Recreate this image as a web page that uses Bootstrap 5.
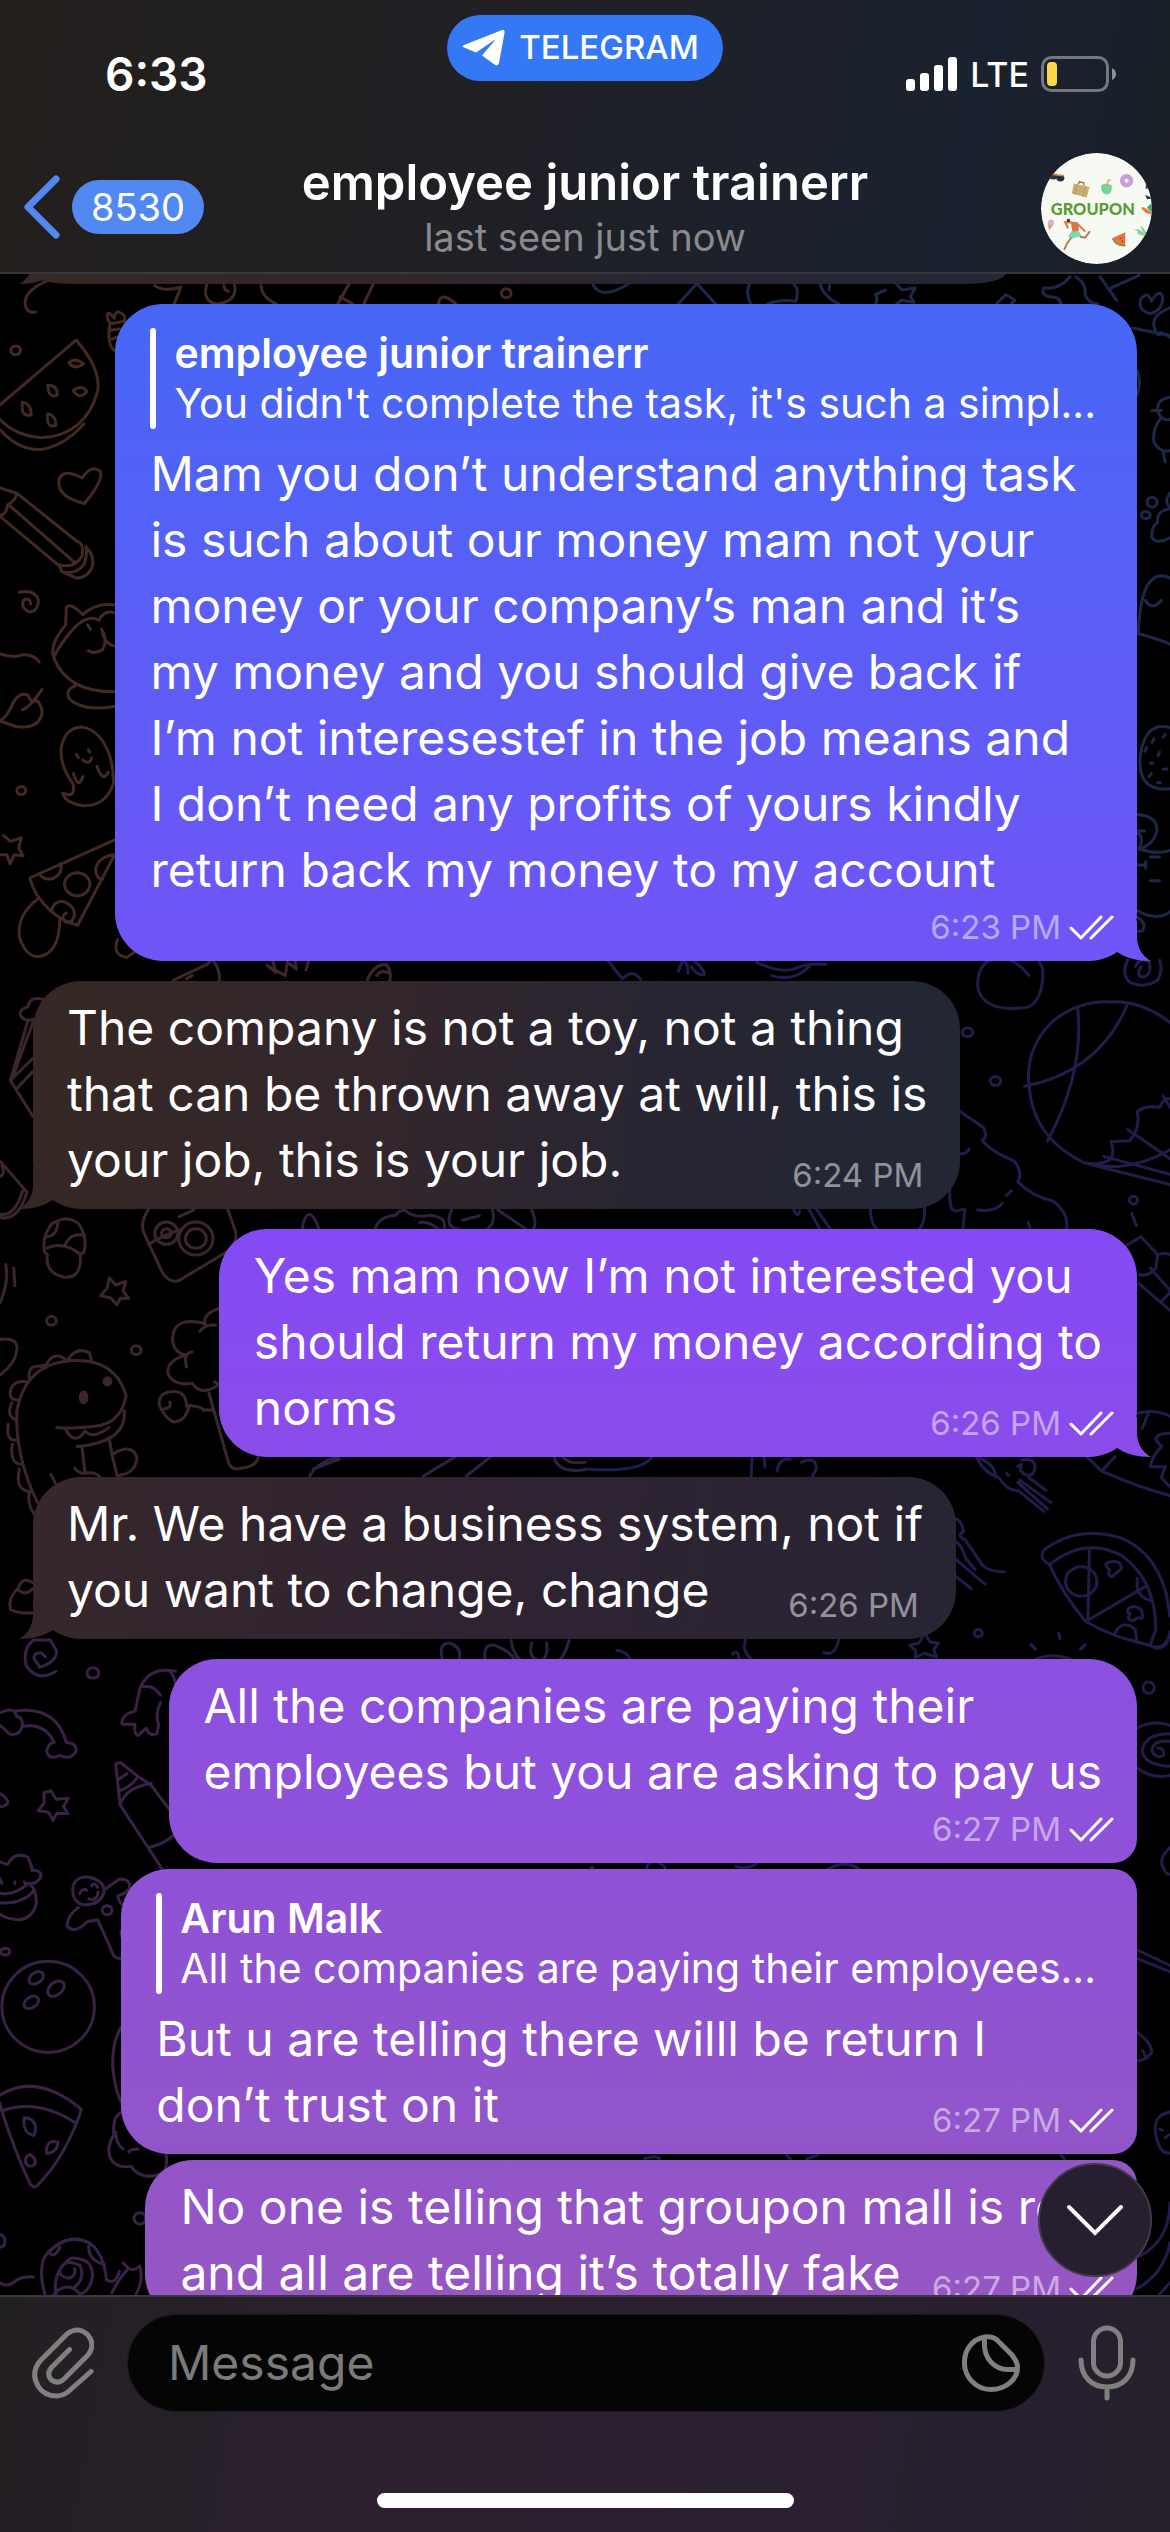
<!DOCTYPE html>
<html lang="en">
<head>
<meta charset="utf-8">
<meta name="viewport" content="width=device-width, initial-scale=1">
<title>employee junior trainerr</title>
<link href="https://cdn.jsdelivr.net/npm/bootstrap@5.3.0/dist/css/bootstrap.min.css" rel="stylesheet">
<style>
  body { background: #000; color: #fff; font-family: Inter, "Liberation Sans", sans-serif; }
  svg { display: block; flex: none; }
  button, a { color: inherit; }

  /* header */
  .chat-header { background: linear-gradient(100deg, #231f1d 0%, #211f20 22%, #1f2027 48%, #1a222f 82%, #1a1f26 100%); border-bottom: 2px solid #37383b; }
  .tri { display: grid; grid-template-columns: 1fr auto 1fr; }
  .status-row { height: 153px; padding: 15px 54px 0; }
  .clock { font-size: 46px; line-height: 60px; font-weight: 600; margin: 29px 0 0 51px; }
  .app-pill { height: 66px; padding: 0 24px 0 15px; gap: 14px; background: #3478f6; border-radius: 33px; font-size: 33px; font-weight: 500; }
  .signal { height: 60px; margin-top: 29px; gap: 12px; font-size: 34px; font-weight: 500; }
  .nav-row { height: 119px; padding: 0 18px; }
  .back-link { gap: 12px; height: 108px; padding-left: 6px; }
  .unread { background: #5288f2; height: 54px; padding: 0 19px; border-radius: 27px; font-size: 38px; line-height: 54px; }
  .peer-name { font-size: 49px; line-height: 60px; font-weight: 600; margin: 0; }
  .peer-seen { font-size: 38px; line-height: 48px; color: #8b8b8e; }

  /* thread */
  .thread { gap: 20px; padding: 0 33px; min-height: 0; }
  .wallpaper { inset: 0; width: 100%; height: 100%; fill: none; stroke-width: 3; stroke-linecap: round; stroke-linejoin: round; }
  .wallpaper path, .wallpaper ellipse { vector-effect: non-scaling-stroke; }
  .bubble { border-radius: 48px; padding: 14px 35px 16px; font-size: 48px; line-height: 66px; }
  .bubble p { margin: 0; white-space: nowrap; }
  .bubble-in { background: linear-gradient(95deg, #362824 0%, #33262c 38%, #282532 66%, #222734 100%); padding-left: 34px; padding-right: 33px; }
  .bubble-in.low { background: linear-gradient(95deg, #36272c 0%, #2f2332 50%, #282434 100%); }
  .bubble-out { background: linear-gradient(#4667f6 12%, #7155f6 38%, #844af5 48.5%, #8a4dea 57.5%, #8c50e2 65.5%, #8f52d8 73.5%, #9255c9 85%, #9656c3 91%) fixed; }
  .join-top { border-top-right-radius: 24px; }
  .join-bottom { border-bottom-right-radius: 24px; }
  .stack { gap: 6px; }
  .tail { bottom: 0; }
  .tail-out { right: -14px; }
  .tail-in { left: -14px; }
  .peek { width: 88%; height: 10px; border-radius: 0 0 40px 40px / 0 0 10px 10px; padding: 0; }
  .stamp { font-size: 33px; line-height: 36px; color: #ffffff80; margin-top: 6px; gap: 8px; }
  .stamp.tucked { margin-top: -36px; }
  .bubble-in .stamp { margin-right: 4px; }
  .bubble-out .stamp { margin-right: -12px; }
  .bubble.quoted { padding-top: 24px; padding-right: 41px; }
  .bubble.quoted .stamp { margin-right: -18px; }
  .quote { gap: 18px; margin-bottom: 12px; font-size: 41px; line-height: 51px; white-space: nowrap; }
  .quote-bar { width: 6px; height: 101px; border-radius: 3px; background: #fff; }
  .quote strong { font-weight: 600; display: block; height: 50px; }
  .jump { right: 18px; bottom: 18px; width: 114px; height: 114px; border-radius: 50%; background: #271f30; border: 2px solid #423a4b; }

  /* composer */
  .composer { background: linear-gradient(100deg, #221f22 0%, #2c202f 35%, #2c2030 55%, #251f2c 100%); border-top: 2px solid #3b373e; height: 237px; color: #808080; }
  .composer-row { padding: 17px 34px 0 32px; gap: 33px; }
  .field-wrap { height: 98px; border-radius: 49px; background: #050505; border: 1px solid #1d1a1f; padding: 0 24px 0 40px; }
  .field-wrap input { background: none; border: 0; outline: 0; color: #fff; font-size: 48px; padding: 0; min-width: 0; }
  .field-wrap input::placeholder { color: #7b7b7b; opacity: 1; }
  .plain { background: none; border: 0; padding: 0; color: inherit; }
  .home-bar { width: 417px; height: 15px; border-radius: 8px; background: #fff; margin: 81px auto 0; }
</style>
<script src="https://cdn.jsdelivr.net/npm/bootstrap@5.3.0/dist/js/bootstrap.bundle.min.js"></script>
</head>
<body class="vh-100 overflow-hidden d-flex flex-column">

<svg width="0" height="0" class="position-absolute" aria-hidden="true">
  <symbol id="ticks" viewBox="0 0 45 27"><path d="M2 14 L12 24 L32 3 M22 24 L43 3" fill="none" stroke="#fff" stroke-width="3" stroke-linecap="round" stroke-linejoin="round"/></symbol>
  <symbol id="tail" viewBox="0 0 34 40"><path d="M20 0 V16 C20 27 26 36 34 40 C20 40 9 37 0 31 V0 Z" fill="currentColor"/></symbol>
</svg>

<header class="chat-header flex-shrink-0">
  <div class="status-row tri align-items-start">
    <div class="clock">6:33</div>
    <div class="app-pill d-flex align-items-center">
      <svg width="43" height="36" viewBox="0 0 43 36"><path d="M1 17 Q0 16 2 15 L40 0 Q43 -1 42.500 3 L37 33 Q36 37 32.500 34.500 L20 25.500 L34 9 L14 22.500 Z" fill="#fff"/></svg>
      <span>TELEGRAM</span>
    </div>
    <div class="signal d-flex align-items-center justify-content-end">
      <svg width="52" height="35" viewBox="0 0 52 35" fill="#fff"><rect y="22" width="9" height="12" rx="3"/><rect x="14" y="16" width="9" height="18" rx="3"/><rect x="28" y="8" width="9" height="26" rx="3"/><rect x="42" width="9" height="34" rx="3"/></svg>
      <span>LTE</span>
      <svg width="75" height="36" viewBox="0 0 75 36"><rect x="1.500" y="1.500" width="65" height="33" rx="9" fill="none" stroke="#74777f" stroke-width="3"/><rect x="6" y="6" width="10" height="24" rx="4" fill="#fad649"/><path d="M71 12 Q75 14 75 18 T71 24 Z" fill="#8d9096"/></svg>
    </div>
  </div>
  <div class="nav-row tri">
    <a href="#" class="back-link d-flex align-items-center text-decoration-none text-white" aria-label="Back, 8530 unread">
      <svg width="36" height="64" viewBox="0 0 36 64"><path d="M32 4 L4 32 L32 60" fill="none" stroke="#5288f2" stroke-width="7" stroke-linecap="round" stroke-linejoin="round"/></svg>
      <span class="unread">8530</span>
    </a>
    <div class="text-center">
      <h1 class="peer-name">employee junior trainerr</h1>
      <div class="peer-seen">last seen just now</div>
    </div>
    <a href="#" class="ms-auto" aria-label="Profile">
      <svg width="111" height="111" viewBox="33 40 332 332">
        <clipPath id="face"><circle cx="199" cy="206" r="166"/></clipPath>
        <g clip-path="url(#face)">
          <circle cx="199" cy="206" r="166" fill="#f6faf3"/>
          <ellipse cx="70" cy="110" rx="13" ry="9" fill="#3a2f35"/><ellipse cx="91" cy="115" rx="12" ry="10" fill="#2b2b3d"/><path d="M58 103 L102 108" stroke="#d98a3d" stroke-width="4"/>
          <path d="M131 131 L178 142 L170 173 L125 161 Z" fill="#dba765"/><path d="M142 132 L134 164 M166 139 L158 170" stroke="#79b997" stroke-width="5"/><path d="M145 133 L148 126 L161 129 L161 137" fill="none" stroke="#9c6a3c" stroke-width="4"/>
          <path d="M213 136 Q229 128 245 137 Q247 164 228 164 Q211 161 213 136 Z" fill="#79d39b"/><path d="M230 138 L234 122 L241 120" fill="none" stroke="#e0944e" stroke-width="4"/>
          <circle cx="289" cy="123" r="13" fill="none" stroke="#c6a0db" stroke-width="14"/>
          <path d="M347 128 L365 143 L346 147 Z M345 165 L368 176 L350 178 Z" fill="#27314a"/><path d="M350 203 L368 185 V222 Z" fill="#3aa17e"/><path d="M332 203 Q345 199 368 222 Q345 226 332 203 Z" fill="#ee7b32"/>
          <text x="188" y="225" text-anchor="middle" font-family="Lato, sans-serif" font-weight="900" font-size="49" fill="#5a9a35">GROUPON</text>
          <path d="M54 252 L71 253 L57 272 Z" fill="#dd9a62"/><circle cx="63" cy="248" r="9" fill="#d9b2d0"/>
          <path d="M122 245 L145 248 L146 274 L127 277 Z" fill="#de7444"/><path d="M124 248 L105 247 L113 263 M145 255 L164 273" fill="none" stroke="#de7444" stroke-width="6" stroke-linecap="round"/><circle cx="115" cy="242" r="5" fill="#4a342c"/>
          <path d="M124 275 L147 275 L155 290 L138 292 L124 298 L114 288 Z" fill="#7fd8ad"/><path d="M152 291 L165 293 L178 276 M122 295 L110 312 L103 328" fill="none" stroke="#c07a50" stroke-width="6" stroke-linecap="round"/>
          <path d="M247 294 L285 277 L285 318 Q255 319 247 294 Z" fill="#ec6f3d"/><path d="M247 296 Q256 320 286 317" fill="none" stroke="#57a463" stroke-width="4"/><circle cx="270" cy="295" r="2" fill="#693020"/><circle cx="277" cy="304" r="2" fill="#693020"/>
          <path d="M311 270 Q330 263 344 286 Q331 262 330 258 Q342 261 350 286 Q350 265 365 260 L365 290 Q340 292 320 280 Q330 272 311 270Z" fill="#8fcea5"/>
        </g>
      </svg>
    </a>
  </div>
</header>

<main class="thread position-relative flex-grow-1 overflow-hidden d-flex flex-column">
  <svg class="wallpaper position-absolute" viewBox="0 274 1170 2021" preserveAspectRatio="xMidYMin slice" aria-hidden="true">
    <g transform="translate(0 270) scale(.3731 .4464)" stroke="#422a22">
      <path d="M140 20 Q60 45 68 80 Q75 98 95 94 M415 35 Q440 50 485 38 L467 76 M555 30 Q540 70 580 76 Q640 70 628 32 M600 35 Q600 45 612 48 M700 35 Q700 60 740 76 M1000 32 L975 76 M935 32 L905 76 M912 60 L945 76 M1175 76 Q1180 45 1222 76"/>
      <ellipse cx="1357" cy="52" rx="13" ry="10"/>
      <path d="M0 302 L204 157 Q270 220 262 270 Q230 370 110 376 Q40 370 0 335 M0 358 Q50 405 110 402 Q170 395 225 345 M185 208 Q200 195 224 210 Q200 225 185 208 M196 270 Q220 255 233 272 Q215 292 196 270 M128 258 Q155 258 153 280 Q130 290 128 258 M60 296 Q85 300 83 325 Q55 330 60 296 M128 322 Q150 325 150 348 Q122 355 128 322"/>
      <ellipse cx="42" cy="180" rx="13" ry="10"/>
      <path d="M220 466 Q160 440 157 478 Q160 510 226 523 Q280 470 268 450 Q245 435 220 466 Z"/>
      <path d="M0 488 L45 500 Q40 520 20 525 Q20 545 0 550 M45 500 L205 607 M22 525 L200 655 M0 552 L155 660 M205 607 Q225 610 220 640 Q200 670 158 660 L165 675 Q200 685 225 660 Q235 640 230 620 Q255 640 247 665 Q235 690 205 690 L165 675"/>
      <path d="M52 722 Q95 715 103 740 Q100 770 75 765 Q55 755 63 740 Q80 732 82 748"/>
      <path d="M306 750 Q255 745 222 772 Q190 745 178 755 L176 795 Q130 840 145 870 Q180 945 306 945 M145 865 Q190 800 225 785 Q250 775 265 785 Q280 760 306 768 M235 795 L242 805 M272 805 Q290 830 275 850 Q255 862 237 853 M275 815 Q285 840 306 842 M200 932 Q175 940 185 960 Q220 990 306 978 M306 108 Q290 90 288 100 Q285 115 300 120 L333 115 Q340 100 320 95 Q310 90 306 108 M295 120 Q285 165 306 180 M296 135 L320 132 M300 155 L315 150"/>
      <path d="M0 860 Q35 870 60 862 Q90 860 105 878 M0 1010 Q20 1000 35 970 Q50 945 75 952 Q80 970 100 965 Q120 985 108 1005 Q90 1030 40 1022 L0 1010 M60 985 Q80 980 112 940"/>
      <path d="M304 1150 Q285 1200 225 1200 Q175 1195 168 1172 Q205 1185 195 1150 Q160 1110 164 1070 Q175 1025 220 1024 Q270 1030 295 1090 Q305 1120 304 1150 M205 1085 L210 1092 M237 1075 L241 1080 M222 1098 Q240 1110 245 1093 M197 1128 Q210 1165 222 1135 M260 1112 Q275 1150 290 1125"/>
      <ellipse cx="57" cy="1166" rx="12" ry="9"/>
      <path d="M10 1267 L28 1280 L57 1272 L50 1295 L62 1312 L38 1310 L27 1330 L18 1310 L0 1310"/>
      <path d="M306 1277 L80 1362 Q90 1400 135 1435 Q170 1460 208 1468 L306 1312 M105 1352 Q120 1370 145 1362 Q170 1350 162 1330 M306 1310 Q260 1315 256 1345 Q260 1365 275 1365 M100 1410 Q45 1445 52 1495 Q70 1540 105 1538 Q160 1530 160 1455 M138 1435 Q145 1412 170 1415 Q205 1425 198 1450 Q190 1465 175 1460 Q160 1450 178 1440 M315 1500 Q300 1535 340 1540 L365 1525"/>
      <ellipse cx="207" cy="1376" rx="34" ry="26"/>
    </g>
    <g transform="translate(585 270) scale(.3731 .4464)" stroke="#1d2848">
      <path d="M20 30 Q40 70 115 32 M250 76 L300 30 L350 76 M440 32 Q430 55 445 76 M490 76 Q520 65 565 70 Q575 45 560 32 M630 32 Q640 60 680 76 M655 35 V45 M780 76 Q785 60 778 55 L805 45 M835 32 L850 45 L885 40 L872 60 L882 72 L848 68 L835 76 M1105 74 L1128 55 L1152 68 L1142 76 M1300 15 Q1270 45 1230 40 Q1220 55 1245 60 Q1275 60 1275 76 M1315 15 Q1345 30 1340 55 Q1350 76 1375 76 M1380 15 L1425 68 M1410 40 L1485 12 M1518 70 Q1510 45 1490 65 Q1480 90 1515 98 Q1550 90 1548 60 Q1540 40 1518 70 M1568 85 Q1520 100 1525 125 Q1535 155 1545 140 L1568 150 M1468 130 L1568 147 M1480 225 Q1492 250 1480 280 M1568 285 Q1530 290 1535 315 Q1545 340 1568 335 M1520 315 H1545 M1540 335 Q1520 360 1525 385 Q1540 410 1568 405 M1550 408 L1555 430"/>
      <ellipse cx="1520" cy="520" rx="13" ry="11"/><ellipse cx="1503" cy="549" rx="12" ry="8"/>
      <path d="M1568 500 Q1550 520 1568 530 M1568 535 Q1530 540 1535 565 Q1515 580 1520 600 Q1530 615 1568 600 M1568 690 Q1490 660 1483 815 Q1530 825 1568 838 M1502 740 Q1520 765 1545 740 M1568 1025 Q1500 1010 1488 1090 Q1480 1170 1568 1162 M1505 1070 L1500 1078 M1525 1050 L1520 1058 M1555 1040 L1550 1046 M1515 1105 H1522 M1540 1080 L1536 1088 M1512 1135 L1518 1128 M1535 1148 H1542 M1550 1118 H1560 M1480 1220 Q1540 1225 1532 1260 Q1520 1290 1485 1297 Q1500 1270 1480 1260 M1480 1257 H1500 M1485 1297 Q1530 1310 1568 1300 M1480 1333 H1503 M1503 1325 V1340 M1515 1315 H1540 M1515 1368 H1540 M1480 1435 Q1530 1460 1568 1438 M1480 1450 Q1505 1460 1495 1480 L1480 1482"/>
    </g>
    <g transform="translate(0 960) scale(.3731 .4464)" stroke="#3b2630">
      <path d="M465 45 L555 10 L565 0 M570 0 Q590 20 588 45 M500 42 L515 35 M765 35 L715 12 L740 28 L730 0 M765 35 L770 5 L795 20 L790 0 M820 22 L828 0 M985 45 Q1000 10 1035 10 Q1050 25 1045 45 M1010 35 Q1020 20 1045 30"/>
      <path d="M115 88 Q80 80 75 105 Q50 110 55 125 Q70 140 88 133 M75 135 L28 270 L88 350 M88 140 L35 260 M28 270 L88 220 M45 288 L88 250 M0 450 L72 520 M0 485 Q15 480 5 460 M72 520 Q50 585 0 577 M60 518 Q40 575 0 570"/>
      <path d="M120 655 Q110 620 140 590 Q180 570 210 590 Q235 620 225 655 L215 660 Q220 715 170 710 Q120 700 127 660 Z M127 645 Q170 630 213 658 M120 620 Q155 620 155 585 M175 637 Q190 610 227 617 M15 682 Q25 720 0 768 M37 690 L40 730"/>
      <path d="M0 850 Q50 845 45 875 Q40 905 0 930 M293 712 L310 728 L337 720 L330 742 L345 758 L323 758 L313 772 L297 757 L270 752 L287 735 Z"/>
      <ellipse cx="138" cy="808" rx="13" ry="10"/><ellipse cx="365" cy="874" rx="13" ry="10"/>
      <path d="M100 1215 Q40 1110 45 1010 Q70 900 200 897 Q310 895 338 975 Q325 1040 250 1045 Q200 1050 152 1047 M78 937 Q75 905 110 910 Q120 905 125 912 M125 905 Q140 880 168 890 Q180 900 180 900 M182 895 Q205 865 240 880 L246 900 M45 985 Q20 985 30 960 Q40 940 72 945 M42 1030 Q15 1020 32 992 M45 1075 Q15 1080 22 1040 M60 1130 Q25 1130 33 1085 M75 1190 Q40 1185 52 1140 M95 1245 Q70 1220 80 1190 M333 1010 Q340 1080 207 1090 M175 1050 Q200 1090 228 1055 Q250 1075 292 1047 M220 1092 L228 1150 Q210 1150 200 1138 M228 1150 Q255 1145 268 1158 M292 1070 Q305 1130 315 1158 M300 1108 Q355 1080 367 1115 Q365 1150 315 1155 M137 1152 L148 1172"/>
      <ellipse cx="224" cy="980" rx="9" ry="12" fill="#3b2630"/><ellipse cx="288" cy="944" rx="9" ry="8" fill="#3b2630"/>
      <path d="M588 780 Q540 795 550 815 Q465 795 462 850 Q465 880 498 885 Q440 900 452 930 Q470 955 515 948 Q540 980 588 950 M535 832 Q550 815 578 818 M515 878 Q490 880 500 912 M440 1005 Q460 1005 455 990 M500 1000 Q500 965 460 967 Q420 970 428 1000 Q450 1035 470 1035 Q500 1030 507 998 Q540 1000 545 1008 L570 1008 M560 970 L612 1125 Q620 1145 650 1138 Q685 1135 692 1115 M575 945 L588 950"/>
      <path d="M398 558 Q375 590 385 610 L435 700 Q455 725 480 718 L615 650 Q635 635 632 610 L610 558 M398 637 Q440 615 480 605 M480 575 L520 560"/>
      <ellipse cx="446" cy="612" rx="31" ry="25"/><ellipse cx="446" cy="612" rx="13" ry="10"/><ellipse cx="525" cy="624" rx="46" ry="37"/><ellipse cx="525" cy="624" rx="28" ry="22"/>
      <path d="M88 1395 Q60 1380 50 1405 Q20 1430 28 1455 Q50 1465 88 1462 M50 1412 Q70 1425 88 1408"/>
    </g>
    <g transform="translate(0 960) scale(.3731 .4464)" stroke="#2d2340">
      <path d="M810 603 Q815 570 830 570 Q845 575 855 603 M1005 603 Q1015 575 1060 572 Q1070 560 1085 560 Q1110 580 1150 572 Q1200 575 1190 603 M1125 588 Q1150 585 1175 603 M1210 560 Q1190 600 1230 603 M1320 560 Q1330 590 1305 603 M1240 583 L1285 573 M1425 560 Q1440 590 1430 603 M1335 560 L1410 603 M830 1156 Q850 1125 905 1113 M840 1140 L910 1118 M1135 1156 L1220 1113 M1250 1156 L1315 1113 M1485 1113 Q1495 1150 1568 1142 M1510 1113 Q1520 1130 1568 1125 M1185 1565 Q1175 1530 1205 1530 Q1240 1540 1230 1568 M1300 1568 Q1295 1530 1325 1535 Q1370 1550 1380 1568 M1370 1525 Q1375 1555 1395 1568 M1425 1530 Q1415 1560 1440 1568 M1465 1530 Q1470 1555 1455 1568 M1525 1525 Q1515 1555 1500 1568"/>
    </g>
    <g transform="translate(585 960) scale(.3731 .4464)" stroke="#211d4a">
      <path d="M60 0 L100 42 L120 30 Q140 30 150 45 M250 25 L262 0 Q280 10 275 30 M290 0 Q320 20 320 33 Q300 35 285 15 M460 5 Q520 30 560 20 Q600 5 645 10 M500 35 Q560 50 600 15"/>
      <path d="M1190 35 Q1140 -20 1075 5 Q1045 30 1055 70 Q1080 120 1190 105 Q1230 85 1227 20 L1215 0 M1455 0 Q1435 30 1460 50 Q1500 65 1535 45 Q1550 20 1540 0 M1490 15 Q1475 40 1500 38 Q1520 30 1512 5 Q1490 -10 1475 15"/>
      <ellipse cx="1025" cy="162" rx="14" ry="10"/><ellipse cx="1100" cy="271" rx="14" ry="10"/><ellipse cx="1470" cy="538" rx="11" ry="9"/><ellipse cx="1054" cy="1508" rx="11" ry="8"/>
      <path d="M1568 140 Q1490 90 1410 94 Q1320 90 1250 140 Q1180 200 1190 280 Q1200 400 1340 455 Q1450 480 1568 425 M1320 105 Q1340 250 1240 405 M1455 97 Q1380 250 1178 283 M1568 310 Q1550 310 1540 330 Q1500 325 1480 340 Q1490 375 1460 405 L1410 407 Q1420 430 1410 445 Q1390 460 1340 455 L1568 503 M1455 380 L1568 445 M1390 440 L1568 480 M1550 305 L1568 330"/>
      <path d="M997 335 L1068 375 Q1080 395 1065 405 Q1090 430 1150 450 Q1175 475 1160 497 Q1200 530 1255 540 Q1300 570 1290 603 M978 515 Q975 565 995 562 L1018 558 L1013 603 M1003 433 Q1020 438 1030 423 M1052 560 Q1100 565 1118 545 M1130 527 L1143 517 M1188 588 L1193 600 M765 558 Q765 590 782 603 M910 552 Q912 590 895 603 M600 558 L630 603 M620 558 L658 603 M560 560 Q570 580 575 562 M1465 568 L1478 595 M1450 640 L1490 620 L1535 660 L1530 690 Q1510 710 1485 705 M1535 660 Q1560 655 1568 660 M1485 725 L1568 785 M1515 690 L1568 740 M1545 765 L1568 745"/>
      <path d="M1480 1015 Q1530 1005 1568 1022 M1493 1050 L1510 1015 M1345 1113 L1385 1145 Q1480 1180 1568 1200 M1385 1145 L1420 1113 M1568 1060 Q1530 1060 1530 1075 L1545 1090 Q1520 1110 1515 1135 L1555 1135 L1545 1160 L1568 1180 M1050 1115 Q1070 1150 1110 1160 Q1130 1190 1160 1188 L1230 1235 M1160 1170 L1240 1230 M1165 1165 L1248 1215 M1190 1160 L1235 1188 M1170 1130 Q1160 1150 1190 1155 Q1210 1150 1205 1130 Q1200 1115 1170 1120 M1055 1115 Q1100 1130 1100 1158 M1130 1150 L1135 1155 M1160 1135 L1168 1130 M445 1156 L448 1113 M480 1113 L482 1135 M515 1145 Q520 1115 550 1118 M580 1125 Q620 1110 620 1140 L610 1156 M0 1140 Q150 1150 180 1113"/>
      <path d="M988 1250 Q1010 1255 1015 1280 Q995 1290 1020 1300 L1065 1355 Q1080 1370 1125 1371 M990 1300 Q1010 1310 1020 1340 L1045 1365 M990 1340 L1072 1398 M990 1378 L1035 1408 M910 1508 L925 1528 L947 1530 L935 1545 L942 1562 L910 1553 L885 1562 L887 1548 L870 1535 L895 1530 Z"/>
      <path d="M1245 1355 Q1215 1340 1230 1322 Q1300 1275 1400 1287 Q1520 1305 1558 1420 L1568 1470 M1245 1355 Q1340 1290 1440 1335 Q1530 1390 1530 1500 L1515 1535 Q1540 1550 1560 1530 L1568 1505 M1245 1355 Q1280 1420 1342 1482 Q1420 1520 1515 1535 M1352 1320 L1348 1480 M1342 1482 L1505 1402 M1480 1385 Q1475 1430 1520 1435 M1420 1508 Q1440 1475 1475 1500 L1478 1520"/>
      <ellipse cx="1330" cy="1392" rx="42" ry="33"/>
      <path d="M1405 1365 Q1385 1350 1410 1348 Q1440 1345 1437 1365 Q1425 1372 1415 1380 Q1400 1385 1405 1365 M1460 1465 Q1445 1455 1468 1448 Q1500 1450 1493 1475 Q1480 1470 1470 1480 Q1450 1480 1460 1465 M1198 1535 L1206 1542 M1270 1508 L1273 1520 M1340 1535 L1330 1542"/>
    </g>
    <g transform="translate(0 1640) scale(.3731 .5688)" stroke="#3a2246">
      <path d="M150 55 Q100 75 70 45 Q60 15 90 0 M105 48 Q150 40 152 20 L135 0 M105 45 Q75 25 110 22 L122 30 M90 0 L135 0"/>
      <ellipse cx="249" cy="58" rx="16" ry="9"/><ellipse cx="14" cy="548" rx="12" ry="6"/><ellipse cx="375" cy="1017" rx="16" ry="10"/>
      <path d="M0 128 Q40 115 45 135 Q60 135 60 148 Q55 170 25 165 Q10 155 0 150 M40 125 Q150 115 178 180 Q205 180 204 195 Q190 212 160 203 Q130 212 125 195 Q130 180 145 180 Q120 145 60 152 M0 270 Q25 280 20 288 Q10 295 0 292"/>
      <path d="M470 55 Q400 45 375 85 L362 125 Q325 130 327 148 L362 148 Q358 165 370 168 L392 155 Q400 170 420 165 L425 150 Q415 130 430 110 M385 82 Q415 80 430 97 M455 55 Q470 65 470 80"/>
      <path d="M137 265 L150 280 L183 278 L170 293 L182 305 L152 305 L142 317 L130 303 L102 300 L118 287 L118 268 L137 265"/>
      <path d="M310 218 L322 215 L370 240 L405 255 L462 305 M310 218 L322 290 L435 403 M318 245 L340 235 M318 265 Q350 260 370 240 M322 290 Q335 260 405 252 M400 365 Q450 355 470 340"/>
      <path d="M0 390 Q20 395 20 395 Q40 370 75 382 Q90 405 85 405 Q115 405 108 418 Q95 430 75 428 Q40 450 0 445 M78 428 Q100 440 97 465 Q85 490 50 492 Q15 490 0 482 M0 462 Q60 465 92 440 M0 420 L5 428 M40 425 V428 M65 425 L70 430"/>
      <path d="M195 440 Q195 415 240 417 Q285 425 278 445 Q265 468 220 465 Q195 460 195 440 M214 445 Q222 435 232 440 M245 432 Q255 425 262 435 M238 455 Q260 460 263 443 M278 440 L320 420 Q350 420 348 435 Q340 445 315 450 Q320 465 338 468 M210 470 Q180 485 180 503 Q200 518 235 495 L262 492 L305 555 Q320 565 338 555 M338 505 Q315 510 330 525"/>
      <ellipse cx="287" cy="475" rx="13" ry="8"/><ellipse cx="129" cy="645" rx="124" ry="80"/><ellipse cx="97" cy="594" rx="20" ry="10" transform="rotate(-15 97 594)"/><ellipse cx="150" cy="613" rx="23" ry="12" transform="rotate(-18 150 613)"/><ellipse cx="84" cy="637" rx="20" ry="10" transform="rotate(-15 84 637)"/>
      <path d="M338 670 Q300 695 302 750 Q310 805 338 825 M0 800 Q100 760 218 825 L205 850 Q100 805 5 828 L0 815 M5 828 Q40 900 80 955 Q92 968 105 955 Q160 920 205 850 M65 840 Q90 840 95 855 Q95 875 85 870 Q60 865 65 840 M125 893 Q130 878 155 883 Q155 900 125 903 Z M82 905 Q100 915 93 922 Q75 930 68 918 Q68 905 82 905"/>
      <path d="M338 828 Q300 830 305 870 Q285 890 295 910 Q310 930 350 925 Q385 955 440 935 Q450 920 445 903 M310 865 Q310 885 330 895 M345 900 Q350 895 370 895"/>
      <path d="M0 1045 Q20 1050 10 1065 L0 1068 M0 1130 Q20 1140 45 1125 Q65 1118 90 1120 M120 1150 Q100 1100 125 1080 Q180 1040 240 1060 Q280 1080 285 1125 Q310 1135 320 1110 M150 1150 Q140 1110 190 1087 Q250 1085 248 1120 Q240 1145 215 1150 M200 1105 Q205 1118 185 1122 Q160 1120 160 1110 Q170 1085 215 1100 Q230 1125 195 1140 M130 1075 Q145 1090 160 1068 M238 1065 Q235 1090 280 1098 M300 1148 Q320 1120 345 1105 L330 1095 M345 1105 Q360 1110 372 1102 M375 1100 Q385 1125 365 1150 M145 1150 Q180 1125 215 1150"/>
    </g>
    <g transform="translate(585 1640) scale(.3731 .5688)" stroke="#241b48">
      <path d="M85 18 Q110 20 120 32 M430 0 Q420 20 445 32 M395 25 Q410 15 412 32 M640 22 Q670 30 680 0 M1195 8 L1208 16 M1340 8 L1328 16 M1210 33 Q1250 22 1300 33 M1465 0 L1525 12 Q1550 15 1560 0"/>
      <ellipse cx="1511" cy="84" rx="15" ry="10"/>
      <path d="M1480 155 Q1520 140 1568 150 M1480 225 Q1520 245 1568 238 M1568 165 Q1500 165 1493 195 Q1500 220 1568 222 M1568 178 Q1520 175 1520 195 Q1530 210 1550 203 Q1555 190 1535 190 M1568 365 Q1535 385 1550 400 Q1555 412 1568 412 M1480 545 L1568 572 M1480 560 L1568 583 M1480 690 Q1515 705 1520 725 Q1500 740 1480 740 M1495 722 L1505 735 M1568 830 Q1520 835 1530 870 Q1540 905 1568 902 M1540 860 L1548 862 M1555 875 L1565 870 M1568 990 Q1565 1060 1480 1085 M1568 1060 Q1550 1115 1480 1140 M1568 1130 L1540 1150"/>
      <path d="M15 403 Q20 395 22 403 M165 403 Q165 390 190 390 Q215 395 215 403 M650 403 Q700 385 735 403 M405 398 Q430 405 460 393 M160 912 Q190 905 200 912 M540 905 L550 912 M595 912 L625 905 M1275 905 L1285 912"/>
    </g>
  </svg>

  <div class="bubble bubble-in peek position-relative flex-shrink-0">
    <svg class="tail tail-in position-absolute" width="34" height="40" color="#352a26"><use href="#tail" transform="matrix(-1 0 0 1 34 0)"/></svg>
  </div>

  <article class="bubble bubble-out quoted position-relative align-self-end flex-shrink-0">
    <div class="quote d-flex align-items-start"><span class="quote-bar"></span><div><strong>employee junior trainerr</strong>You didn't complete the task, it's such a simpl...</div></div>
    <p>Mam you don’t understand anything task<br>is such about our money mam not your<br>money or your company’s man and it’s<br>my money and you should give back if<br>I’m not interesestef in the job means and<br>I don’t need any profits of yours kindly<br>return back my money to my account</p>
    <div class="stamp d-flex justify-content-end align-items-center"><time>6:23 PM</time><svg width="45" height="27"><use href="#ticks"/></svg></div>
    <svg class="tail tail-out position-absolute" width="34" height="40" color="#7055f6"><use href="#tail"/></svg>
  </article>

  <article class="bubble bubble-in position-relative align-self-start flex-shrink-0">
    <p>The company is not a toy, not a thing<br>that can be thrown away at will, this is<br>your job, this is your job.</p>
    <div class="stamp tucked text-end"><time>6:24 PM</time></div>
    <svg class="tail tail-in position-absolute" width="34" height="40" color="#352725"><use href="#tail" transform="matrix(-1 0 0 1 34 0)"/></svg>
  </article>

  <article class="bubble bubble-out position-relative align-self-end flex-shrink-0">
    <p>Yes mam now I’m not interested you<br>should return my money according to<br>norms</p>
    <div class="stamp tucked d-flex justify-content-end align-items-center"><time>6:26 PM</time><svg width="45" height="27"><use href="#ticks"/></svg></div>
    <svg class="tail tail-out position-absolute" width="34" height="40" color="#8a4dea"><use href="#tail"/></svg>
  </article>

  <article class="bubble bubble-in low position-relative align-self-start flex-shrink-0">
    <p>Mr. We have a business system, not if<br>you want to change, change</p>
    <div class="stamp tucked text-end"><time>6:26 PM</time></div>
    <svg class="tail tail-in position-absolute" width="34" height="40" color="#35262c"><use href="#tail" transform="matrix(-1 0 0 1 34 0)"/></svg>
  </article>

  <div class="stack position-relative d-flex flex-column align-items-end flex-shrink-0">
    <article class="bubble bubble-out join-bottom">
      <p>All the companies are paying their<br>employees but you are asking to pay us</p>
      <div class="stamp d-flex justify-content-end align-items-center"><time>6:27 PM</time><svg width="45" height="27"><use href="#ticks"/></svg></div>
    </article>
    <article class="bubble bubble-out quoted join-top join-bottom">
      <div class="quote d-flex align-items-start"><span class="quote-bar"></span><div><strong>Arun Malk</strong>All the companies are paying their employees...</div></div>
      <p>But u are telling there willl be return I<br>don’t trust on it</p>
      <div class="stamp tucked d-flex justify-content-end align-items-center"><time>6:27 PM</time><svg width="45" height="27"><use href="#ticks"/></svg></div>
    </article>
    <article class="bubble bubble-out join-top">
      <p>No one is telling that groupon mall is real<br>and all are telling it’s totally fake</p>
      <div class="stamp tucked d-flex justify-content-end align-items-center"><time>6:27 PM</time><svg width="45" height="27"><use href="#ticks"/></svg></div>
    </article>
  </div>

  <button type="button" class="jump position-absolute d-flex align-items-center justify-content-center p-0" aria-label="Scroll to latest">
    <svg width="58" height="34" viewBox="0 0 58 34"><path d="M3 4 L29 30 L55 4" fill="none" stroke="#fff" stroke-width="4" stroke-linecap="round"/></svg>
  </button>
</main>

<footer class="composer flex-shrink-0">
  <form class="composer-row d-flex align-items-center">
    <button type="button" class="plain" aria-label="Attach">
      <svg width="62" height="72" viewBox="12 15 62 72" fill="none" stroke="currentColor" stroke-width="5" stroke-linecap="round" stroke-linejoin="round"><path d="M49.500 37.500 L32 55 Q26 61.500 31 67.500 Q37.500 73 44 67 L68 43 Q76 33 68 23 Q58 13.500 47 22 L21 48 Q10 60 18 74 Q24 84 37 84 Q44 83.500 49 79 L71 59.500"/></svg>
    </button>
    <div class="field-wrap flex-grow-1 d-flex align-items-center">
      <input type="text" class="flex-grow-1" placeholder="Message" aria-label="Message">
      <button type="button" class="plain" aria-label="Stickers">
        <svg width="58" height="58" viewBox="0 0 58 58" fill="none" stroke="currentColor" stroke-width="5"><path d="M23 3 C10 5 2.500 16 2.500 28 A26.500 26.500 0 0 0 29 55.500 C43 55.500 55.500 46 55.500 33 C55.500 29 53 25 50 21 L38 9 C34 4 29 2 23 3 Z M22.500 4 V11 C22.500 24 32 35.500 46 35.500 H55" stroke-linejoin="round"/></svg>
      </button>
    </div>
    <button type="button" class="plain" aria-label="Record voice message">
      <svg width="58" height="76" viewBox="0 0 58 76" fill="none" stroke="currentColor" stroke-width="5" stroke-linecap="round"><rect x="15.500" y="3" width="27" height="48" rx="13.500"/><path d="M3 35 C3 52 14 62 29 62 C44 62 55 52 55 35 M29 62 V73"/></svg>
    </button>
  </form>
  <div class="home-bar"></div>
</footer>
</body>
</html>
